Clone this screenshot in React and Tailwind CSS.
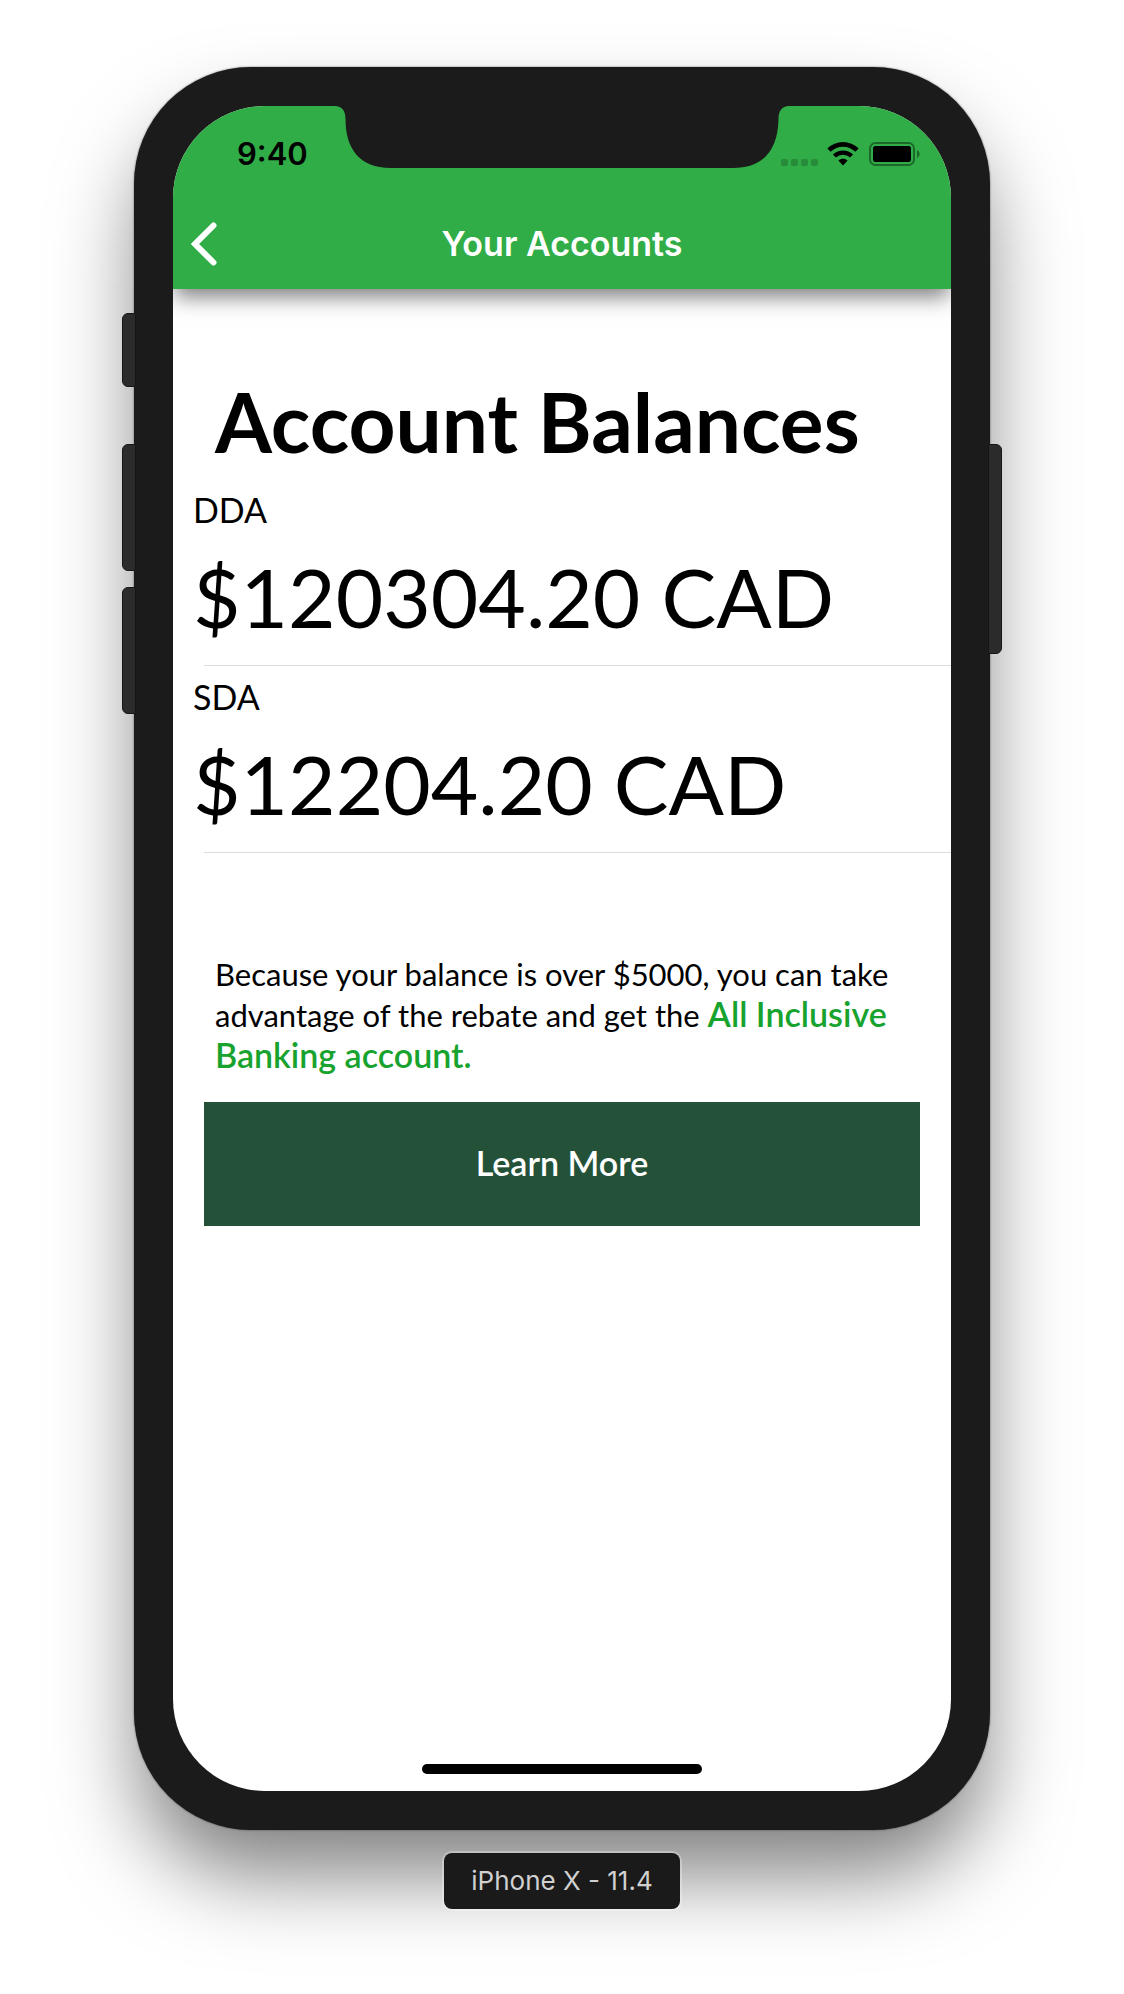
import React from "react";

const accounts = [
  { name: "DDA", balance: "$120304.20 CAD" },
  { name: "SDA", balance: "$12204.20 CAD" },
];

function WifiIcon() {
  return (
    <svg className="h-6 w-8" viewBox="0 0 32 24" aria-hidden="true" fill="none" stroke="#000">
      <path d="M2 8.2C10 0.4 22 0.4 30 8.2" strokeWidth="4.6" />
      <path d="M7.4 14C12.3 9.5 19.7 9.5 24.6 14" strokeWidth="4.4" />
      <path d="M11.4 18.6C14 16 18 16 20.6 18.6L16 23.4Z" fill="#000" stroke="none" />
    </svg>
  );
}

function BatteryIcon() {
  return (
    <svg className="h-6 w-[51px]" viewBox="0 0 51 24" aria-hidden="true">
      <rect x="1" y="1" width="44" height="22" rx="5.5" fill="none" stroke="#1c672a" strokeWidth="2" />
      <rect x="4" y="4" width="38" height="16" rx="2.5" fill="#000" />
      <path d="M48 8C51.5 9.5 51.5 14.5 48 16Z" fill="#1c672a" />
    </svg>
  );
}

function Notch() {
  return (
    <svg
      className="absolute left-1/2 top-0 h-[62px] w-[454px] -translate-x-1/2"
      viewBox="0 0 454 62"
      aria-hidden="true"
    >
      <path
        d="M0 -1V0C7 0 10.500 5 10.500 13C10.500 42 24 62 56 62H398C430 62 443 42 443.500 13C443.500 5 447 0 454 0V-1Z"
        fill="#1b1b1b"
      />
    </svg>
  );
}

const sideButton = "absolute w-[14px] border border-[#161616] bg-[#2b2b2b]";

export default function App() {
  return (
    <div className="flex min-h-screen flex-col items-center overflow-hidden bg-white px-[10%] pb-20 pt-[67px] font-['Lato',sans-serif] text-black">
      <div className="relative w-full max-w-[856px] rounded-[117px] bg-[#1b1b1b] p-[39px] shadow-[0_0_2px_rgba(0,0,0,0.6),0_50px_84px_-6px_rgba(0,0,0,0.5)]">
        <span className={`${sideButton} -left-3 top-[246px] h-[74px] rounded-l-md`} />
        <span className={`${sideButton} -left-3 top-[377px] h-[127px] rounded-l-md`} />
        <span className={`${sideButton} -left-3 top-[520px] h-[127px] rounded-l-md`} />
        <span className={`${sideButton} -right-3 top-[377px] h-[210px] rounded-r-md`} />

        <div className="relative flex aspect-[778/1685] flex-col overflow-hidden rounded-[92px] bg-white">
          <header className="bg-[#30ad47] font-['Inter',sans-serif] shadow-[0_10px_20px_-2px_rgba(0,0,0,0.5)]">
            <div className="flex h-24 items-center justify-between pl-16 pr-[31px]">
              <time className="text-[31px] font-semibold leading-9">9:40</time>
              <div className="flex items-center">
                <div className="mr-[9px] mt-4 flex gap-[3px]">
                  <span className="size-[7px] rounded-xs bg-[#278b39]" />
                  <span className="size-[7px] rounded-xs bg-[#278b39]" />
                  <span className="size-[7px] rounded-xs bg-[#278b39]" />
                  <span className="size-[7px] rounded-xs bg-[#278b39]" />
                </div>
                <WifiIcon />
                <span className="w-[10px]" />
                <BatteryIcon />
              </div>
            </div>
            <div className="grid h-[87px] grid-cols-[64px_1fr_64px] items-center pb-1 text-white">
              <button type="button" aria-label="Back" className="pl-[17px]">
                <svg className="h-11 w-7" viewBox="0 0 28 44" fill="none" aria-hidden="true">
                  <path
                    d="M23.500 3.500L5 22L23.500 40.500"
                    stroke="currentColor"
                    strokeWidth="6"
                    strokeLinecap="round"
                    strokeLinejoin="miter"
                  />
                </svg>
              </button>
              <h1 className="text-center text-[34px] font-semibold leading-10">Your Accounts</h1>
            </div>
          </header>
          <Notch />

          <main className="flex-1">
            <h2 className="mb-[10px] mt-[84px] px-[42px] text-[82px] font-bold leading-[96px]">
              Account Balances
            </h2>
            <dl>
              {accounts.map((account) => (
                <div key={account.name}>
                  <div className="px-5 pb-5 pt-[9px]">
                    <dt className="text-[34px] leading-[44px]">{account.name}</dt>
                    <dd className="mt-4 text-[82px] leading-[97px]">{account.balance}</dd>
                  </div>
                  <div className="ml-[31px] h-px bg-[#dcdcdc]" />
                </div>
              ))}
            </dl>
            <p className="mt-[101px] px-[42px] text-[31px] leading-[41px]">
              Because your balance is over $5000, you can take advantage of the rebate and get the{" "}
              <a href="#banking" className="text-[34px] font-semibold leading-9 text-[#18a32f]">
                All Inclusive Banking account.
              </a>
            </p>
            <div className="px-[31px] pt-[25px]">
              <button
                type="button"
                className="h-[124px] w-full bg-[#235239] pb-1 text-[34px] font-semibold text-white"
              >
                Learn More
              </button>
            </div>
          </main>

          <div className="mx-auto mb-[17px] h-[10px] w-[36%] rounded-full bg-black" />
        </div>
      </div>

      <div className="relative mt-[23px] rounded-lg bg-[#1a1a1a] px-[27px] py-3 font-['Inter',sans-serif] text-[26px] leading-8 text-[#d0d0d0] shadow-[0_0_0_2px_rgba(255,255,255,0.3)]">
        iPhone X - 11.4
      </div>
    </div>
  );
}
